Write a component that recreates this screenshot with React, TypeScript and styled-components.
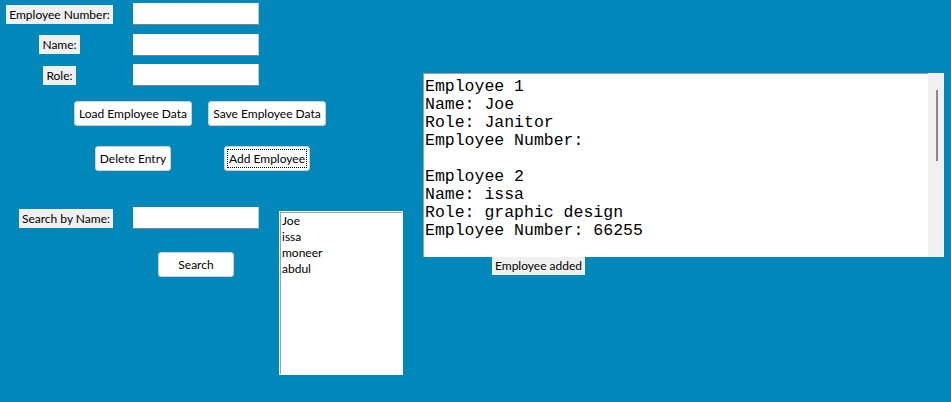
import React from "react";
import styled, { createGlobalStyle } from "styled-components";

const GlobalStyle = createGlobalStyle`
  html, body {
    margin: 0;
    padding: 0;
    background: #0088bb;
  }
  * {
    box-sizing: border-box;
  }
`;

const uiFont = `Lato, "Noto Sans", "Liberation Sans", sans-serif`;

const StyledWindow = styled.div`
  width: 951px;
  height: 402px;
  background: #0088bb;
  display: flex;
  overflow: hidden;
  font-family: ${uiFont};
  font-size: 12px;
  color: #000;
`;

const StyledLeftPane = styled.div`
  width: 423px;
  flex-shrink: 0;
  display: flex;
  flex-direction: column;
`;

const StyledFormGrid = styled.div`
  display: grid;
  grid-template-columns: 119px 126px;
  grid-auto-rows: 22px;
  column-gap: 14px;
  row-gap: 8.5px;
  padding-top: 3px;
  align-items: center;
`;

const StyledLabel = styled.span<{ $align?: "center" | "end" }>`
  justify-self: ${(p) => p.$align ?? "center"};
  background: #f0f0f0;
  height: 19px;
  line-height: 19px;
  padding: 0 3px;
  white-space: nowrap;
`;

const StyledEntry = styled.div`
  width: 126px;
  height: 22px;
  background: #fff;
  border-bottom: 1px solid #808080;
  border-right: 1px solid #c8c8c8;
`;

const StyledButtonGrid = styled.div`
  display: grid;
  grid-template-columns: 134px 134px;
  row-gap: 20px;
  margin-left: 66px;
  margin-top: 15px;
  justify-items: center;
`;

const StyledButton = styled.button<{ $focused?: boolean }>`
  height: 25px;
  padding: 0 4px;
  background: #fff;
  border: 1px solid #cfcfcf;
  border-radius: 3px;
  font-family: ${uiFont};
  font-size: 12px;
  color: #000;
  white-space: nowrap;
  outline: ${(p) => (p.$focused ? "1px dotted #000" : "none")};
  outline-offset: -4px;
`;

const StyledSearchArea = styled.div`
  display: flex;
  margin-top: 36px;
`;

const StyledSearchColumn = styled.div`
  width: 259px;
  display: flex;
  flex-direction: column;
`;

const StyledSearchRow = styled.div`
  display: grid;
  grid-template-columns: 113px 126px;
  column-gap: 20px;
  align-items: center;
  height: 21px;
`;

const StyledSearchButtonWrap = styled.div`
  margin-top: 24px;
  padding-left: 158px;
`;

const StyledListbox = styled.div`
  width: 124px;
  height: 164px;
  margin-left: 20px;
  margin-top: 4px;
  background: #fff;
  border: 1px solid #fff;
  box-shadow: inset 1px 1px 0 #a0a0a0;
  padding: 1px 0 0 2px;
`;

const StyledListItem = styled.div`
  height: 16px;
  line-height: 16px;
`;

const StyledRightPane = styled.div`
  display: flex;
  flex-direction: column;
  padding-top: 73px;
`;

const StyledTextBox = styled.div`
  width: 521px;
  height: 184px;
  display: flex;
  background: #fff;
`;

const StyledTextArea = styled.pre`
  flex: 1;
  margin: 0;
  padding: 4px 0 0 1px;
  border-top: 1px solid #a0a0a0;
  border-left: 1px solid #a0a0a0;
  font-family: "Liberation Mono", "Courier New", monospace;
  font-size: 16.5px;
  line-height: 18px;
  color: #000;
`;

const StyledScrollbar = styled.div`
  width: 16px;
  background: #f0f0f0;
  display: flex;
  justify-content: center;
  padding-top: 17px;
`;

const StyledThumb = styled.div`
  width: 2px;
  height: 71px;
  margin-left: 1px;
  background: #8a8a8a;
`;

const StyledStatus = styled.span`
  align-self: flex-start;
  margin-left: 69px;
  background: #f0f0f0;
  height: 18px;
  line-height: 18px;
  padding: 0 3px;
`;

const employees = [
  { name: "Joe", role: "Janitor", number: "" },
  { name: "issa", role: "graphic design", number: "66255" },
];

const listNames = ["Joe", "issa", "moneer", "abdul"];

export default function App() {
  const text = employees
    .map(
      (e, i) =>
        `Employee ${i + 1}\nName: ${e.name}\nRole: ${e.role}\nEmployee Number: ${e.number}`
    )
    .join("\n\n");

  return (
    <>
      <GlobalStyle />
      <StyledWindow>
        <StyledLeftPane>
          <StyledFormGrid>
            <StyledLabel>Employee Number:</StyledLabel>
            <StyledEntry />
            <StyledLabel>Name:</StyledLabel>
            <StyledEntry />
            <StyledLabel>Role:</StyledLabel>
            <StyledEntry />
          </StyledFormGrid>
          <StyledButtonGrid>
            <StyledButton>Load Employee Data</StyledButton>
            <StyledButton>Save Employee Data</StyledButton>
            <StyledButton>Delete Entry</StyledButton>
            <StyledButton $focused>Add Employee</StyledButton>
          </StyledButtonGrid>
          <StyledSearchArea>
            <StyledSearchColumn>
              <StyledSearchRow>
                <StyledLabel $align="end">Search by Name:</StyledLabel>
                <StyledEntry />
              </StyledSearchRow>
              <StyledSearchButtonWrap>
                <StyledButton style={{ width: 76 }}>Search</StyledButton>
              </StyledSearchButtonWrap>
            </StyledSearchColumn>
            <StyledListbox>
              {listNames.map((n) => (
                <StyledListItem key={n}>{n}</StyledListItem>
              ))}
            </StyledListbox>
          </StyledSearchArea>
        </StyledLeftPane>
        <StyledRightPane>
          <StyledTextBox>
            <StyledTextArea>{text}</StyledTextArea>
            <StyledScrollbar>
              <StyledThumb />
            </StyledScrollbar>
          </StyledTextBox>
          <StyledStatus>Employee added</StyledStatus>
        </StyledRightPane>
      </StyledWindow>
    </>
  );
}
